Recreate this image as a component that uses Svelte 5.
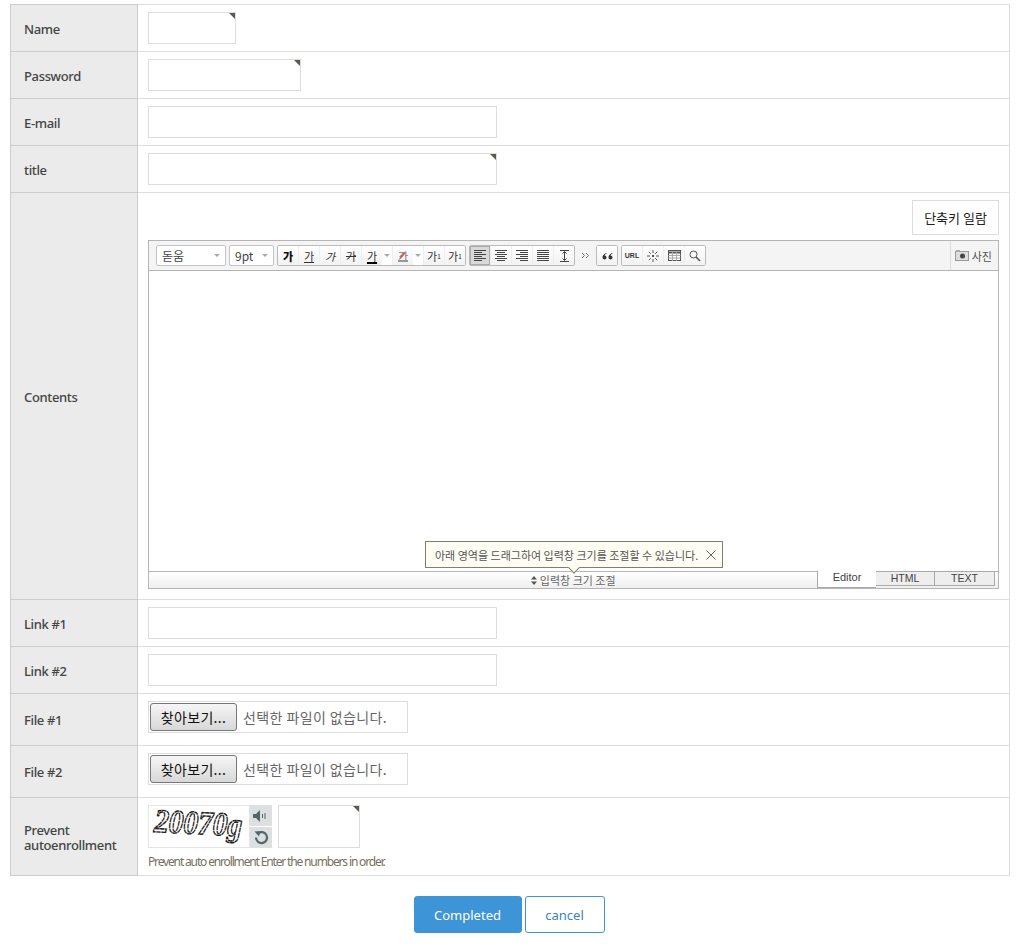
<script>
  let simpleRows = [
    { label: 'Name', size: 'sm', required: true },
    { label: 'Password', size: 'md', required: true },
    { label: 'E-mail', size: 'lg', required: false },
    { label: 'title', size: 'lg', required: true }
  ];
  let linkRows = ['Link #1', 'Link #2'];
  let fileRows = ['File #1', 'File #2'];
  let glyphs = ['bold', 'under', 'ital', 'strike'];
</script>

<div class="page">
  <table class="form">
    <tbody>
      {#each simpleRows as row}
        <tr>
          <th>{row.label}</th>
          <td>
            <div class="input {row.size}">
              {#if row.required}<span class="corner"></span>{/if}
            </div>
          </td>
        </tr>
      {/each}

      <tr>
        <th>Contents</th>
        <td class="contents">
          <div class="shortcut-row"><button class="shortcut">단축키 일람</button></div>
          <div class="editor">
            <div class="toolbar">
              <div class="select font"><span>돋움</span><i class="caret"></i></div>
              <div class="select pt"><span>9pt</span><i class="caret"></i></div>

              <div class="group">
                {#each glyphs as g}
                  <span class="tool ga {g}">가</span>
                {/each}
                <span class="tool ga color">가</span>
                <i class="caret mini"></i>
                <span class="tool ga hilite">가<svg width="12" height="12" viewBox="0 0 12 12"><path d="M3 7.500 8 2.500" stroke="#d0605a" stroke-width="2.200"/><path d="M1 11h10" stroke="#999" stroke-width="2"/></svg></span>
                <i class="caret mini"></i>
                <span class="tool ga">가<sup>1</sup></span>
                <span class="tool ga">가<sub>1</sub></span>
              </div>

              <div class="group">
                <span class="tool active">
                  <svg width="12" height="11" viewBox="0 0 12 11"><path d="M0 .5h12M0 2.500h8M0 4.500h12M0 6.500h8M0 8.500h12M0 10.500h8" stroke="#444"/></svg>
                </span>
                <span class="tool">
                  <svg width="12" height="11" viewBox="0 0 12 11"><path d="M0 .5h12M2 2.500h8M0 4.500h12M2 6.500h8M0 8.500h12M2 10.500h8" stroke="#444"/></svg>
                </span>
                <span class="tool">
                  <svg width="12" height="11" viewBox="0 0 12 11"><path d="M0 .5h12M4 2.500h8M0 4.500h12M4 6.500h8M0 8.500h12M4 10.500h8" stroke="#444"/></svg>
                </span>
                <span class="tool">
                  <svg width="12" height="11" viewBox="0 0 12 11"><path d="M0 .5h12M0 2.500h12M0 4.500h12M0 6.500h12M0 8.500h12M0 10.500h12" stroke="#444"/></svg>
                </span>
                <span class="tool">
                  <svg width="11" height="12" viewBox="0 0 11 12"><path d="M1 .5h9M1 11.500h9M5.500 2v8" stroke="#444"/><path d="M3.500 3.500 5.500 1.500 7.500 3.500M3.500 8.500 5.500 10.500 7.500 8.500" stroke="#444" fill="none"/></svg>
                </span>
              </div>

              <svg class="more" width="9" height="7" viewBox="0 0 9 7"><path d="M1 1 3.500 3.500 1 6M5 1 7.500 3.500 5 6" stroke="#777" fill="none"/></svg>

              <div class="group">
                <span class="tool quote">
                  <svg width="11" height="8" viewBox="0 0 11 8"><path d="M4.500 1C2 2 .5 3.300 .5 5.500a2 2 0 0 0 4 0 2 2 0 0 0-2-2C3 2.500 3.700 2 4.500 1.600ZM10.500 1C8 2 6.500 3.300 6.500 5.500a2 2 0 0 0 4 0 2 2 0 0 0-2-2C9 2.500 9.700 2 10.500 1.600Z" fill="#333"/></svg>
                </span>
              </div>

              <div class="group">
                <span class="tool url">URL</span>
                <span class="tool">
                  <svg width="12" height="12" viewBox="0 0 12 12"><path d="M6 0v3M6 9v3M0 6h3M9 6h3M1.800 1.800l2 2M8.200 8.200l2 2M10.200 1.800l-2 2M3.800 8.200l-2 2" stroke="#555"/><rect x="5" y="5" width="2" height="2" fill="#555"/></svg>
                </span>
                <span class="tool">
                  <svg width="13" height="11" viewBox="0 0 13 11"><rect x=".5" y=".5" width="12" height="10" fill="#fff" stroke="#555"/><path d="M.5 2.500h12" stroke="#555" stroke-width="2"/><path d="M.5 5.500h12M.5 8h12M4.500 2v9M8.500 2v9" stroke="#aaa"/></svg>
                </span>
                <span class="tool">
                  <svg width="12" height="12" viewBox="0 0 12 12"><circle cx="4.500" cy="4.500" r="3.500" fill="none" stroke="#555"/><path d="M7 7l4 4" stroke="#555" stroke-width="1.600"/></svg>
                </span>
              </div>

              <div class="photo">
                <svg width="14" height="11" viewBox="0 0 14 11"><rect x=".5" y="1.500" width="13" height="9" fill="#ddd" stroke="#999"/><rect x="1" y="0" width="4" height="2" fill="#aaa"/><circle cx="7.500" cy="6" r="2.500" fill="#444"/></svg>
                <span>사진</span>
              </div>
            </div>

            <div class="canvas">
              <div class="tip">
                <span>아래 영역을 드래그하여 입력창 크기를 조절할 수 있습니다.</span>
                <svg width="10" height="10" viewBox="0 0 10 10"><path d="M.5 .5 9.500 9.500M9.500 .5 .5 9.500" stroke="#666"/></svg>
                <i class="tip-arrow"></i>
              </div>
            </div>

            <div class="resizer">
              <div class="drag">
                <svg width="6" height="9" viewBox="0 0 6 9"><path d="M3 0 6 3.500H0ZM3 9 0 5.500H6Z" fill="#555"/></svg>
                입력창 크기 조절
              </div>
              <div class="tabs">
                <span class="tab current">Editor</span>
                <span class="tab html">HTML</span>
                <span class="tab">TEXT</span>
              </div>
            </div>
          </div>
        </td>
      </tr>

      {#each linkRows as label}
        <tr>
          <th>{label}</th>
          <td><div class="input lg"></div></td>
        </tr>
      {/each}

      {#each fileRows as label}
        <tr>
          <th>{label}</th>
          <td>
            <div class="file">
              <button class="browse">찾아보기...</button>
              <span class="file-name">선택한 파일이 없습니다.</span>
            </div>
          </td>
        </tr>
      {/each}

      <tr>
        <th>Prevent<br />autoenrollment</th>
        <td class="captcha-cell">
          <div class="captcha">
            <div class="captcha-img">
              <svg width="100" height="41" viewBox="0 0 100 41">
                <text x="5" y="28" class="captcha-text" textLength="88" lengthAdjust="spacingAndGlyphs" transform="rotate(3 50 20)">20070g</text>
              </svg>
            </div>
            <div class="captcha-btns">
              <span class="cap-btn">
                <svg width="16" height="12" viewBox="0 0 16 12"><path d="M0 4h3l4-4v12L3 8H0Z" fill="#56656a"/><path d="M9.500 4v4M12 3v6" stroke="#56656a"/></svg>
              </span>
              <span class="cap-btn">
                <svg width="15" height="15" viewBox="0 0 15 15"><path d="M4 3.300A5.500 5.500 0 1 1 2 7.500" fill="none" stroke="#56656a" stroke-width="2.200"/><path d="M.5 1.500 6.500 1 5 6.500Z" fill="#56656a"/></svg>
              </span>
            </div>
            <div class="input cap"><span class="corner"></span></div>
          </div>
          <p class="hint">Prevent auto enrollment Enter the numbers in order.</p>
        </td>
      </tr>
    </tbody>
  </table>

  <div class="actions">
    <button class="btn primary">Completed</button>
    <button class="btn outline">cancel</button>
  </div>
</div>

<style>
  :global(body) {
    margin: 0;
    background: #fff;
  }

  .page {
    padding: 4px 23px 0 10px;
    font-family: "Noto Sans", "Noto Sans CJK KR", sans-serif;
    color: #333;
  }

  .form {
    width: 1000px;
    border-collapse: collapse;
    table-layout: fixed;
  }

  th {
    width: 127px;
    box-sizing: border-box;
    padding: 2px 13px 0;
    background: #ebebeb;
    border: 1px solid #ccc;
    font-size: 13px;
    font-weight: 500;
    line-height: 15px;
    letter-spacing: -0.35px;
    text-align: left;
    color: #444;
  }

  td {
    padding: 7px 10px;
    border: 1px solid #ddd;
  }

  .input {
    position: relative;
    box-sizing: border-box;
    height: 32px;
    border: 1px solid #ddd;
    background: #fff;
  }

  .input.sm { width: 88px; }
  .input.md { width: 153px; }
  .input.lg { width: 349px; }
  .input.cap { width: 82px; height: 43px; }

  .corner {
    position: absolute;
    top: 0;
    right: 0;
    border-style: solid;
    border-width: 0 6px 6px 0;
    border-color: transparent #5a5a50 transparent transparent;
  }

  .contents {
    padding: 7px 10px 10px 10px;
  }

  .shortcut-row {
    display: flex;
    justify-content: flex-end;
    margin-bottom: 5px;
  }

  .shortcut {
    box-sizing: border-box;
    width: 87px;
    height: 35px;
    padding: 0;
    border: 1px solid #ddd;
    background: #fff;
    font: 400 13px "Noto Sans CJK KR", sans-serif;
    color: #222;
  }

  .editor {
    display: flex;
    flex-direction: column;
    box-sizing: border-box;
    width: 851px;
    height: 349px;
    border: 1px solid #b5b5b5;
    font-family: "Noto Sans CJK KR", sans-serif;
  }

  .toolbar {
    display: flex;
    align-items: center;
    gap: 3px;
    box-sizing: border-box;
    height: 30px;
    padding: 0 0 0 7px;
    background: #f4f4f4;
    border-bottom: 1px solid #b5b5b5;
  }

  .select {
    display: flex;
    align-items: center;
    justify-content: space-between;
    box-sizing: border-box;
    height: 21px;
    padding: 0 5px;
    background: #fff;
    border: 1px solid #c4c4c4;
    border-radius: 2px;
    font-size: 12px;
    color: #444;
  }

  .select.font { width: 70px; }
  .select.pt { width: 45px; }

  .caret {
    display: block;
    border-style: solid;
    border-width: 3px 3px 0 3px;
    border-color: #aaa transparent transparent transparent;
  }

  .caret.mini {
    margin: 0 2px;
  }

  .group {
    display: flex;
    align-items: center;
    box-sizing: border-box;
    height: 21px;
    background: #fff;
    border: 1px solid #bbb;
    border-radius: 2px;
  }

  .tool {
    position: relative;
    display: flex;
    align-items: center;
    justify-content: center;
    width: 20px;
    height: 19px;
    border-left: 1px solid #eee;
    background: linear-gradient(#fff, #f2f2f2);
    font-size: 11px;
    color: #333;
  }

  .tool:first-child { border-left: 0; }

  .tool.active {
    background: #d9d9d9;
    box-shadow: inset 0 0 0 1px #aaa;
  }

  .ga.bold { font-weight: 900; color: #111; }
  .ga.under { text-decoration: underline; }
  .ga.ital { font-style: italic; }
  .ga.strike { text-decoration: line-through; }
  .ga.color { text-decoration: underline 2px #000; }
  .ga.hilite { color: #777; }
  .ga.hilite svg { position: absolute; left: 4px; top: 4px; }
  .ga sup, .ga sub { font-size: 7px; line-height: 0; }

  .more { margin: 0 3px; }

  .url {
    font: bold 7px "Liberation Sans", sans-serif;
  }

  .photo {
    display: flex;
    align-items: center;
    gap: 3px;
    height: 100%;
    margin-left: auto;
    padding: 0 6px 0 4px;
    border-left: 1px solid #ddd;
    font-size: 11px;
    color: #555;
  }

  .canvas {
    position: relative;
    flex: 1;
    background: #fff;
  }

  .tip {
    position: absolute;
    left: 276px;
    bottom: 3px;
    display: flex;
    align-items: center;
    gap: 7px;
    box-sizing: border-box;
    width: 298px;
    height: 27px;
    padding: 0 6px 0 9px;
    background: #fefdf3;
    border: 1px solid #7f7f70;
    font-size: 11px;
    color: #555;
    white-space: nowrap;
  }

  .tip span { flex: 1; }

  .tip-arrow {
    position: absolute;
    left: 144px;
    bottom: -5px;
    width: 7px;
    height: 7px;
    transform: rotate(45deg);
    background: #fefdf3;
    border-right: 1px solid #7f7f70;
    border-bottom: 1px solid #7f7f70;
  }

  .resizer {
    display: flex;
    box-sizing: border-box;
    height: 17px;
    border-top: 1px solid #b5b5b5;
    background: linear-gradient(#fff, #efefef);
  }

  .drag {
    flex: 1;
    padding-left: 181px;
    font-size: 11px;
    line-height: 16px;
    text-align: center;
    color: #666;
  }

  .tabs {
    display: flex;
    margin-top: -1px;
    padding-right: 3px;
  }

  .tab {
    box-sizing: border-box;
    width: 60px;
    height: 15px;
    background: #eee;
    border: 1px solid #aaa;
    border-left: 0;
    font: 10.5px/13px "Liberation Sans", sans-serif;
    text-align: center;
    color: #444;
  }

  .tab.html { width: 59px; }

  .tab.current {
    width: 59px;
    height: 17px;
    background: #fff;
    border-top: 0;
    border-right: 0;
    border-left: 1px solid #aaa;
    line-height: 12px;
    font-size: 11px;
  }

  .file {
    display: flex;
    align-items: center;
    box-sizing: border-box;
    width: 260px;
    height: 32px;
    padding-left: 1px;
    border: 1px solid #ddd;
    margin-bottom: 5px;
  }

  .browse {
    box-sizing: border-box;
    width: 87px;
    height: 28px;
    padding: 0;
    border: 1px solid #777;
    border-radius: 3px;
    background: linear-gradient(#f6f6f6, #d8d8d8);
    font: 14px "Noto Sans CJK KR", sans-serif;
    letter-spacing: 0.3px;
    color: #111;
  }

  .file-name {
    margin-left: 6px;
    font: 14px "Noto Sans CJK KR", sans-serif;
    letter-spacing: 0.4px;
    color: #666;
  }

  .captcha-cell {
    padding-bottom: 6px;
  }

  .captcha {
    display: flex;
    align-items: stretch;
    height: 43px;
  }

  .captcha-img {
    box-sizing: border-box;
    width: 102px;
    border: 1px solid #e4e4e4;
  }

  .captcha-text {
    font: italic 700 33px "Liberation Serif", serif;
    fill: #fff;
    stroke: #222;
    stroke-width: 1.400;
    stroke-dasharray: 5 0.600;
  }

  .captcha-btns {
    display: flex;
    flex-direction: column;
    gap: 1px;
    margin-right: 6px;
  }

  .cap-btn {
    display: flex;
    align-items: center;
    justify-content: center;
    width: 22px;
    height: 21px;
    background: #dde0e0;
  }

  .hint {
    margin: 7px 0 0;
    font-size: 12px;
    line-height: 14px;
    letter-spacing: -1.150px;
    color: #777060;
  }

  .actions {
    display: flex;
    justify-content: center;
    gap: 3px;
    padding: 20px 2px 0 0;
  }

  .btn {
    box-sizing: border-box;
    height: 37px;
    border-radius: 3px;
    font: 13px "Noto Sans", sans-serif;
    padding: 0;
  }

  .primary {
    width: 108px;
    background: #3d94d6;
    border: 1px solid #3d94d6;
    color: #fff;
  }

  .outline {
    width: 80px;
    background: #fff;
    border: 1px solid #3d94d6;
    color: #3d7fc6;
  }
</style>
